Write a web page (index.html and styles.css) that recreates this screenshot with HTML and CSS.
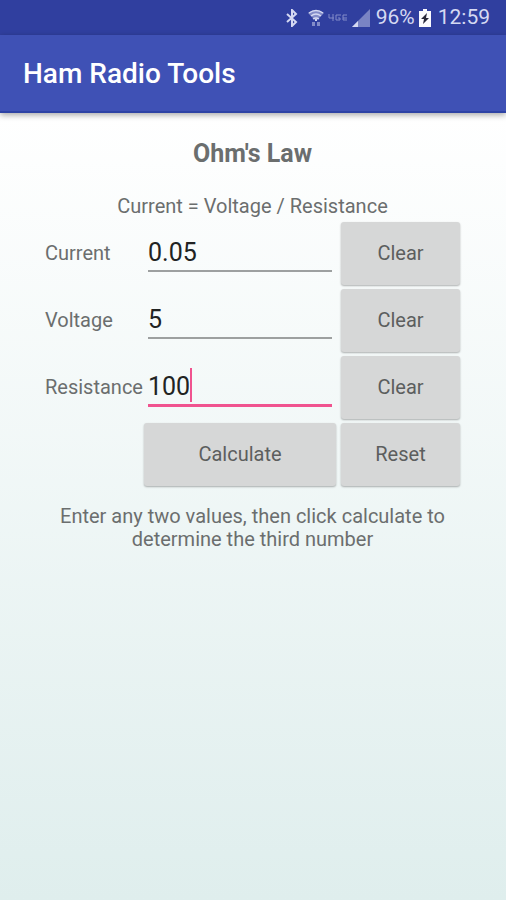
FILE: index.html
```
<!DOCTYPE html>
<html lang="en">
<head>
    <meta charset="UTF-8">
    <meta name="viewport" content="width=device-width, initial-scale=1.0">
    <title>Ham Radio Tools</title>
    <link rel="stylesheet" href="styles.css">
</head>
<body>
    <div class="status-bar">
        <svg class="icon-bluetooth" width="12" height="18" viewBox="0 0 12 18" aria-hidden="true">
            <path d="M1 5l9 8-4 4V1l4 4-9 8" fill="none" stroke="currentColor" stroke-width="2"/>
        </svg>
        <svg class="icon-wifi" width="16" height="18" viewBox="0 0 16 18" aria-hidden="true">
            <path d="M0 4q8-6 16 0l-8 8z" fill="currentColor" opacity="0.5"/>
            <path d="M1 4q7-5 14 0M3 7q5-4 10 0M5 10q3-2 6 0" fill="none" stroke="currentColor" stroke-width="1.5"/>
            <path d="M7 10h2v2H7z" fill="currentColor"/>
            <path d="M4 13h3v4H4zM9 13h3v4H9z" fill="currentColor" opacity="0.5"/>
        </svg>
        <svg class="icon-lte" width="20" height="8" viewBox="0 0 20 8" aria-hidden="true">
            <path d="M1 0v4h5M5 0v7M13 1H8v5h4V4h-2M19 1h-4v5h4M15 4h4" fill="none" stroke="currentColor" stroke-width="1"/>
        </svg>
        <svg class="icon-signal" width="18" height="18" viewBox="0 0 18 18" aria-hidden="true">
            <path d="M18 0v18H0z" fill="currentColor" opacity="0.45"/>
            <path d="M6 12v6H0z" fill="currentColor"/>
        </svg>
        <span class="battery-level">96%</span>
        <svg class="icon-battery" width="12" height="18" viewBox="0 0 12 18" aria-hidden="true">
            <path d="M4 0h4v2h4v16H0V2h4z" fill="#fafaff"/>
            <path d="M8 4L2 10h3l-1 5 6-6H7z" fill="#26263a"/>
        </svg>
        <span class="clock">12:59</span>
    </div>

    <header class="app-bar">
        <h1>Ham Radio Tools</h1>
    </header>

    <main class="content">
        <h2>Ohm's Law</h2>
        <p class="formula">Current = Voltage / Resistance</p>

        <form class="calculator" id="calculator">
            <label for="current">Current</label>
            <div class="field">
                <input type="text" id="current" inputmode="decimal" value="0.05" autocomplete="off">
            </div>
            <button type="button" data-clear="current">Clear</button>

            <label for="voltage">Voltage</label>
            <div class="field">
                <input type="text" id="voltage" inputmode="decimal" value="5" autocomplete="off">
            </div>
            <button type="button" data-clear="voltage">Clear</button>

            <label for="resistance">Resistance</label>
            <div class="field active">
                <input type="text" id="resistance" inputmode="decimal" value="100" autocomplete="off">
            </div>
            <button type="button" data-clear="resistance">Clear</button>

            <button type="submit" class="calculate">Calculate</button>
            <button type="button" id="reset">Reset</button>
        </form>

        <p class="hint">Enter any two values, then click calculate to determine the third number</p>
    </main>

    <script>
        const current = document.getElementById('current');
        const voltage = document.getElementById('voltage');
        const resistance = document.getElementById('resistance');
        const inputs = [current, voltage, resistance];

        // the drawn cursor goes away once a field has the real one
        inputs.forEach(input => {
            input.addEventListener('focus', () => {
                document.querySelectorAll('.field').forEach(field => field.classList.remove('active'));
            });
        });

        document.querySelectorAll('[data-clear]').forEach(button => {
            button.addEventListener('click', () => {
                const input = document.getElementById(button.dataset.clear);
                input.value = '';
                input.focus();
            });
        });

        document.getElementById('reset').addEventListener('click', () => {
            inputs.forEach(input => input.value = '');
            current.focus();
        });

        document.getElementById('calculator').addEventListener('submit', event => {
            event.preventDefault();
            const i = parseFloat(current.value);
            const v = parseFloat(voltage.value);
            const r = parseFloat(resistance.value);
            if (isNaN(i)) {
                current.value = v / r;
            } else if (isNaN(v)) {
                voltage.value = i * r;
            } else if (isNaN(r)) {
                resistance.value = v / i;
            }
        });
    </script>
</body>
</html>
```
FILE: styles.css
```
:root {
    --status-color: #303f9f;
    --primary-color: #3f51b5;
    --accent-color: #f0538f;
    --text-color: #6b6e6e;
    --input-color: #212323;
    --line-color: #9da0a0;
    --button-bg: #d6d7d7;
}

* {
    box-sizing: border-box;
}

body {
    margin: 0;
    min-height: 100vh;
    display: flex;
    flex-direction: column;
    font-family: Roboto, "Liberation Sans", sans-serif;
    font-size: 20px;
    line-height: 23px;
    color: var(--text-color);
}

.status-bar {
    display: flex;
    align-items: center;
    justify-content: flex-end;
    height: 35px;
    padding: 0 16px;
    background-color: var(--status-color);
    color: #d5d9f2;
}

.icon-wifi {
    margin-left: 10px;
}

.icon-lte {
    margin: 0 4px;
    opacity: 0.5;
}

.battery-level {
    margin: 0 4px 0 6px;
}

.clock {
    margin-left: 7px;
}

.battery-level,
.clock {
    font-size: 21px;
}

.app-bar {
    position: relative;
    padding: 24px 23px 22px;
    background-color: var(--primary-color);
    border-bottom: 2px solid #2e43a5;
    box-shadow: 0 2px 6px rgba(0, 0, 0, 0.35);
}

h1 {
    margin: 0;
    font-size: 28px;
    line-height: 30px;
    font-weight: 500;
    color: #ffffff;
}

.content {
    flex: 1;
    padding: 26px 46px 26px 45px;
    background: linear-gradient(#ffffff, #dfeeed);
    text-align: center;
}

h2 {
    margin: 0 0 26px;
    font-size: 25px;
    line-height: 30px;
    font-weight: 700;
}

p {
    margin: 0;
}

.calculator {
    display: grid;
    grid-template-columns: 99px 1fr 124px;
    row-gap: 4px;
    margin: 4px 0 19px;
    text-align: left;
}

label {
    align-self: center;
}

.field {
    position: relative;
    margin: 0 4px;
    font-size: 25px;
}

input {
    display: block;
    width: 100%;
    height: 50px;
    padding: 12px 0 0;
    border: 0;
    border-bottom: 2px solid var(--line-color);
    border-radius: 0;
    outline: none;
    background: transparent;
    color: var(--input-color);
    caret-color: var(--accent-color);
    font: inherit;
}

input:focus,
.active input {
    height: 51px;
    border-bottom: 3px solid var(--accent-color);
}

/* text cursor, placed after three digits */
.active::after {
    content: "";
    position: absolute;
    top: 12px;
    left: 3ch;
    width: 2px;
    height: 34px;
    background-color: var(--accent-color);
}

button {
    height: 63px;
    margin-left: 5px;
    padding: 0;
    border: 0;
    border-radius: 3px;
    background-color: var(--button-bg);
    box-shadow: 0 1px 2px rgba(0, 0, 0, 0.3);
    color: #5c5e5e;
    font: inherit;
    cursor: pointer;
}

button:active {
    background-color: #c4c6c6;
}

.calculate {
    grid-column: 2;
    margin-left: 0;
}
```
